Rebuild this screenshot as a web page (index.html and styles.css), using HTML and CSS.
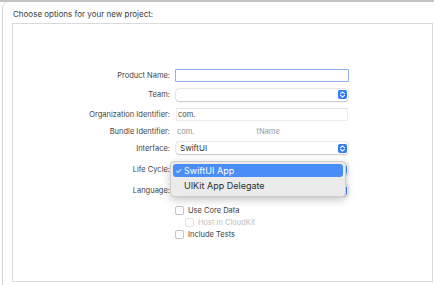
FILE: index.html
```html
<!DOCTYPE html>
<html>
<head>
<meta charset="utf-8">
<link rel="stylesheet" href="styles.css">
</head>
<body>
<div class="topbar"></div>
<div class="window">
  <div class="title">Choose options for your new project:</div>
  <div class="box">
    <div class="form">
      <div class="row r1">
        <div class="label">Product Name:</div>
        <div class="field focus"></div>
      </div>
      <div class="row r2">
        <div class="label">Team:</div>
        <div class="popup"><span class="ptext"></span><span class="stepper"><svg width="9" height="9" viewBox="0 0 9 9"><path d="M2.6 3.6 4.5 1.9 6.4 3.6M2.6 5.4 4.5 7.1 6.4 5.4" fill="none" stroke="#fff" stroke-width="1.1" stroke-linecap="round" stroke-linejoin="round"/></svg></span></div>
      </div>
      <div class="row r3">
        <div class="label">Organization Identifier:</div>
        <div class="field plain"><span class="ftext">com.</span></div>
      </div>
      <div class="row r4">
        <div class="label">Bundle Identifier:</div>
        <div class="bundle"><span class="b1">com.</span><span class="b2">tName</span></div>
      </div>
      <div class="row r5">
        <div class="label">Interface:</div>
        <div class="popup"><span class="ptext">SwiftUI</span><span class="stepper"><svg width="9" height="9" viewBox="0 0 9 9"><path d="M2.6 3.6 4.5 1.9 6.4 3.6M2.6 5.4 4.5 7.1 6.4 5.4" fill="none" stroke="#fff" stroke-width="1.1" stroke-linecap="round" stroke-linejoin="round"/></svg></span></div>
      </div>
      <div class="row r6">
        <div class="label">Life Cycle:</div>
        <div class="popup"><span class="ptext"></span><span class="stepper"><svg width="9" height="9" viewBox="0 0 9 9"><path d="M2.6 3.6 4.5 1.9 6.4 3.6M2.6 5.4 4.5 7.1 6.4 5.4" fill="none" stroke="#fff" stroke-width="1.1" stroke-linecap="round" stroke-linejoin="round"/></svg></span></div>
      </div>
      <div class="row r7">
        <div class="label">Language:</div>
        <div class="popup"><span class="ptext"></span><span class="stepper"><svg width="9" height="9" viewBox="0 0 9 9"><path d="M2.6 3.6 4.5 1.9 6.4 3.6M2.6 5.4 4.5 7.1 6.4 5.4" fill="none" stroke="#fff" stroke-width="1.1" stroke-linecap="round" stroke-linejoin="round"/></svg></span></div>
      </div>
      <div class="checks">
        <div class="crow"><span class="cb"></span><span class="ctext">Use Core Data</span></div>
        <div class="crow sub"><span class="cb dis"></span><span class="ctext dis">Host in CloudKit</span></div>
        <div class="crow"><span class="cb"></span><span class="ctext">Include Tests</span></div>
      </div>
      <div class="menu">
        <div class="mitem sel"><span class="check">✓</span><span>SwiftUI App</span></div>
        <div class="mitem"><span class="check"></span><span>UIKit App Delegate</span></div>
      </div>
    </div>
  </div>
</div>
</body>
</html>
```

FILE: styles.css
```css
html, body {
  margin: 0;
  padding: 0;
  background: #ffffff;
  width: 434px;
  height: 285px;
  overflow: hidden;
  font-family: Inter, "Noto Sans", "Liberation Sans", sans-serif;
}
.topbar {
  height: 2px;
  background: #c2c2c2;
}
.window {
  margin-left: 2px;
  border-left: 1px solid #d2d2d2;
  border-top-left-radius: 6px;
  background: #fff;
  height: 283px;
  box-sizing: border-box;
  padding-left: 9px;
}
.title {
  font-size: 8px;
  line-height: 10px;
  color: #3a3a3a;
  padding-top: 7px;
  padding-left: 1px;
  height: 14px;
}
.box {
  width: 421px;
  height: 259px;
  box-sizing: border-box;
  border: 1px solid #dadada;
}
.form {
  position: relative;
  padding-top: 41px;
}
.row {
  display: flex;
  align-items: center;
}
.r1 { height: 20px; }
.r2 { height: 19px; }
.r3 { height: 20px; }
.r4 { height: 14px; }
.r5 { height: 20px; }
.r6 { height: 22px; }
.r7 { height: 20px; }
.label {
  width: 157px;
  margin-right: 6px;
  text-align: right;
  font-size: 7.5px;
  color: #444;
  white-space: nowrap;
}
.field {
  width: 172px;
  height: 13px;
  box-sizing: border-box;
  background: #fff;
  display: flex;
  align-items: center;
}
.field.focus {
  width: 174px;
  margin-left: -1px;
  border: 1.5px solid #8eaef0;
  border-radius: 1px;
}
.field.plain {
  border: 1px solid #ececec;
  border-top-color: #e2e2e2;
}
.ftext {
  font-size: 7.5px;
  color: #444;
  padding-left: 1px;
}
.bundle {
  display: flex;
  font-size: 7.5px;
  color: #8c8c8c;
  padding-left: 1px;
}
.b2 {
  margin-left: 62px;
  color: #9a9a9a;
}
.popup {
  width: 172px;
  height: 12px;
  box-sizing: border-box;
  background: #fff;
  border-radius: 3px;
  box-shadow: 0 0 0 0.5px rgba(0,0,0,0.12), 0 0.5px 1.5px rgba(0,0,0,0.18);
  display: flex;
  align-items: center;
  justify-content: space-between;
  padding-right: 1px;
}
.ptext {
  font-size: 8px;
  color: #333;
  padding-left: 4px;
}
.stepper {
  width: 9px;
  height: 9px;
  border-radius: 2px;
  background: #2f7cf5;
  display: flex;
}
.checks {
  margin-top: 4px;
  padding-left: 162px;
}
.crow {
  height: 12px;
  display: flex;
  align-items: center;
}
.crow.sub {
  padding-left: 10px;
}
.cb {
  width: 9px;
  height: 9px;
  box-sizing: border-box;
  border: 1px solid #c4c4c4;
  border-radius: 2px;
  background: #fff;
  margin-right: 4px;
}
.cb.dis {
  border-color: #e2e2e2;
}
.ctext {
  font-size: 7.5px;
  color: #3c3c3c;
}
.ctext.dis {
  color: #c0c0c0;
}
.menu {
  position: absolute;
  left: 157px;
  top: 137px;
  width: 176px;
  height: 36px;
  box-sizing: border-box;
  background: #ebebeb;
  border: 1px solid #cdcdcd;
  border-radius: 4px;
  box-shadow: 0 3px 8px rgba(0,0,0,0.22);
  padding: 2px 2px;
}
.mitem {
  height: 14px;
  display: flex;
  align-items: center;
  font-size: 9px;
  color: #2e2e2e;
  border-radius: 3px;
  padding-left: 2px;
}
.mitem.sel {
  height: 13px;
  background: #4a8df6;
  color: #fff;
  margin-bottom: 1px;
}
.check {
  width: 9px;
  font-size: 8px;
}
```
